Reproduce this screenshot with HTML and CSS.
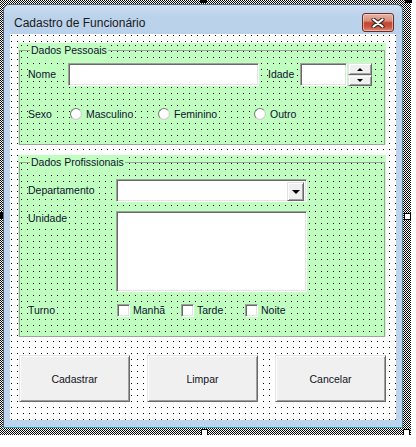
FILE: index.html
```html
<!DOCTYPE html>
<html lang="pt">
<head>
<meta charset="utf-8">
<title>Cadastro de Funcionário</title>
<link rel="stylesheet" href="styles.css">
</head>
<body>
<div class="selection">
  <span class="handle solid h-top"></span>
  <span class="handle solid h-topright"></span>
  <span class="handle solid h-left"></span>
  <span class="handle h-right"></span>
  <span class="handle h-bottom"></span>
  <span class="handle h-bottomright"></span>

  <div class="window">
    <div class="titlebar">
      <span class="title">Cadastro de Funcionário</span>
      <button class="close" type="button" aria-label="Fechar">
        <svg width="14" height="10" viewBox="0 0 14 10">
          <path d="M2.5 1.5 L11.5 8.5 M11.5 1.5 L2.5 8.5" stroke="#3c2a2a" stroke-width="4.2" stroke-linecap="round" fill="none"/>
          <path d="M2.5 1.5 L11.5 8.5 M11.5 1.5 L2.5 8.5" stroke="#ffffff" stroke-width="2.2" stroke-linecap="round" fill="none"/>
        </svg>
      </button>
    </div>

    <div class="client">
      <div class="frame frame-pessoais">
        <fieldset class="group">
          <legend>Dados Pessoais</legend>
          <div class="row row-nome">
            <span class="lbl lbl-nome"><span class="cap">Nome</span></span>
            <span class="textbox tb-nome"></span>
            <span class="lbl lbl-idade"><span class="cap">Idade</span></span>
            <span class="textbox tb-idade"></span>
            <span class="spin">
              <span class="spin-btn"><i class="tri-up"></i></span>
              <span class="spin-btn"><i class="tri-down"></i></span>
            </span>
          </div>
          <div class="row row-sexo">
            <span class="lbl lbl-sexo"><span class="cap">Sexo</span></span>
            <span class="opt opt-m"><span class="opt-body"><span class="radio"></span>Masculino</span></span>
            <span class="opt opt-f"><span class="opt-body"><span class="radio"></span>Feminino</span></span>
            <span class="opt opt-o"><span class="opt-body"><span class="radio"></span>Outro</span></span>
          </div>
        </fieldset>
      </div>

      <div class="frame frame-prof">
        <fieldset class="group">
          <legend>Dados Profissionais</legend>
          <div class="row row-dept">
            <span class="lbl lbl-wide"><span class="cap">Departamento</span></span>
            <span class="textbox combo"><span class="combo-btn"><i class="tri-combo"></i></span></span>
          </div>
          <div class="row row-unid">
            <span class="lbl lbl-wide lbl-top"><span class="cap">Unidade</span></span>
            <span class="textbox tb-unid"></span>
          </div>
          <div class="row row-turno">
            <span class="lbl lbl-wide"><span class="cap">Turno</span></span>
            <span class="chk-opt chk-first"><span class="opt-body"><span class="checkbox"></span>Manhã</span></span>
            <span class="chk-opt"><span class="opt-body"><span class="checkbox"></span>Tarde</span></span>
            <span class="chk-opt"><span class="opt-body"><span class="checkbox"></span>Noite</span></span>
          </div>
        </fieldset>
      </div>

      <div class="buttons">
        <button class="btn" type="button">Cadastrar</button>
        <button class="btn" type="button">Limpar</button>
        <button class="btn" type="button">Cancelar</button>
      </div>
    </div>
  </div>
</div>
</body>
</html>
```

FILE: styles.css
```css
* { box-sizing: border-box; }

html, body {
  margin: 0;
  padding: 0;
  background: #ffffff;
  overflow: hidden;
}

body {
  font-family: "Liberation Sans", Arial, sans-serif;
  font-size: 10.5px;
  color: #101030;
}

/* designer selection hatch */
.selection {
  position: relative;
  width: 416px;
  height: 439px;
  margin: -4px 0 0 -5px;
  padding: 8px 8px 7px 8px;
  background-color: #ffffff;
  background-image: conic-gradient(#000 25%, #fff 0 50%, #000 0 75%, #fff 0);
  background-size: 2px 2px;
}

.handle {
  position: absolute;
  width: 7px;
  height: 7px;
  border: 1px solid #000;
  background: #fff;
}
.handle.solid { background: #000; }
.h-top { left: 205px; top: 0; }
.h-topright { left: 410px; top: 0; }
.h-left { left: 1px; top: 216px; }
.h-right { left: 409px; top: 217px; }
.h-bottom { left: 206px; top: 433px; }
.h-bottomright { left: 408px; top: 433px; }

/* window */
.window {
  width: 400px;
  height: 424px;
  border: 1px solid #56647a;
  border-right-color: #3a8fb0;
  border-bottom-color: #2ea3c8;
  border-radius: 6px 6px 0 0;
  background: linear-gradient(#cadcf0, #bbd2eb 12px, #b9d1ea 29px, #bcd3eb 29px);
  padding: 0 6px 7px 6px;
  display: flex;
  flex-direction: column;
}

.titlebar {
  height: 29px;
  display: flex;
  align-items: flex-start;
}

.title {
  flex: 1;
  padding: 11px 0 0 4px;
  font-family: "Liberation Sans", Arial, sans-serif;
  font-size: 12px;
  line-height: 15px;
  color: #1a1a1a;
}

.close {
  width: 32px;
  height: 19px;
  margin: 8px 2px 0 0;
  padding: 0;
  border: 1px solid #6a2e2a;
  border-radius: 3px;
  background: linear-gradient(#eab3a5, #d88e7c 40%, #c5452f 52%, #c85440 75%, #dc8a70);
  box-shadow: inset 0 0 0 1px rgba(255, 220, 210, 0.55);
  display: flex;
  align-items: center;
  justify-content: center;
}
.close svg { display: block; }

/* client area with designer grid */
.client {
  width: 386px;
  height: 386px;
  background-color: #ffffff;
  background-image: conic-gradient(from 270deg at 1px 1px, #000 25%, transparent 0);
  background-size: 6px 6px;
  background-position: 1px 1px;
  padding: 9px 0 0 8px;
  display: flex;
  flex-direction: column;
}

.frame {
  width: 368px;
  background-color: #c0ffc0;
  background-image: conic-gradient(from 270deg at 1px 1px, #000 25%, transparent 0);
  background-size: 6px 6px;
  background-position: 3px 2px;
  padding: 0 1px 0 1px;
}
.frame-pessoais { height: 102px; }
.frame-prof { height: 182px; margin-top: 10px; }

.group {
  margin: 0;
  height: 100%;
  min-width: 0;
  border: 1px solid #a0a0a0;
  padding: 5px 0 0 8px;
}
.frame-prof .group { padding-top: 9px; }

legend {
  margin-left: 2px;
  padding: 0 1px;
  line-height: 15px;
  font-size: 10.5px;
  background: #c0ffc0;
}

.row {
  display: flex;
  align-items: center;
}

.lbl { line-height: 13px; white-space: nowrap; display: flex; }
.cap { background: #c0ffc0; padding-right: 2px; }
.lbl-nome, .lbl-sexo { width: 40px; flex: none; }
.lbl-idade { width: 32px; margin-left: 9px; flex: none; }
.lbl-wide { width: 88px; flex: none; }
.lbl-top { align-self: flex-start; margin-top: 1px; }

.textbox {
  display: block;
  flex: none;
  height: 23px;
  background: #ffffff;
  border: 1px solid;
  border-color: #a0a0a0 #ffffff #ffffff #a0a0a0;
  box-shadow: inset 1px 1px 0 #696969, inset -1px -1px 0 #e3e3e3;
}
.tb-nome { width: 191px; }
.tb-idade { width: 47px; }
.tb-unid { width: 191px; height: 81px; }

.spin {
  display: flex;
  flex-direction: column;
  width: 24px;
  height: 23px;
  margin-left: 1px;
}
.spin-btn, .combo-btn {
  display: flex;
  align-items: center;
  justify-content: center;
  background: #f0f0f0;
  border: 1px solid;
  border-color: #e3e3e3 #696969 #696969 #e3e3e3;
  box-shadow: inset 1px 1px 0 #ffffff, inset -1px -1px 0 #a0a0a0;
}
.spin-btn { height: 12px; }
.spin-btn + .spin-btn { height: 11px; }

.tri-up, .tri-down, .tri-combo {
  display: block;
  width: 0;
  height: 0;
  border-left: 3px solid transparent;
  border-right: 3px solid transparent;
}
.tri-up { border-bottom: 3px solid #000; }
.tri-down { border-top: 3px solid #000; }
.tri-combo {
  border-left-width: 4px;
  border-right-width: 4px;
  border-top: 4px solid #000;
}

.combo {
  width: 191px;
  display: flex;
  justify-content: flex-end;
  padding: 2px;
}
.combo-btn { width: 17px; height: 19px; }

.row-sexo { margin-top: 20px; height: 16px; }

.opt, .chk-opt {
  display: flex;
  align-items: center;
  flex: none;
  line-height: 13px;
}
.opt-body {
  display: flex;
  align-items: center;
  background: #c0ffc0;
  padding: 1px 2px 1px 0;
}
.opt-m { width: 88px; margin-left: 2px; }
.opt-f { width: 96px; }

.radio {
  width: 12px;
  height: 12px;
  margin-right: 4px;
  border-radius: 50%;
  border: 1px solid;
  border-color: #7c7c7c #d0d0d0 #d0d0d0 #7c7c7c;
  background: radial-gradient(circle at 45% 45%, #ffffff 45%, #e6e6e6 100%);
  flex: none;
}

.row-dept { height: 23px; }
.row-unid { margin-top: 9px; align-items: flex-start; }
.row-turno { margin-top: 12px; height: 13px; }

.chk-opt { width: 64px; }
.chk-first { margin-left: 1px; }

.checkbox {
  width: 13px;
  height: 13px;
  margin-right: 3px;
  background: #ffffff;
  border: 1px solid;
  border-color: #a0a0a0 #ffffff #ffffff #a0a0a0;
  box-shadow: inset 1px 1px 0 #696969, inset -1px -1px 0 #e3e3e3;
  flex: none;
}

.buttons {
  display: flex;
  gap: 17px;
  margin: 18px 0 0 1px;
}
.btn {
  width: 111px;
  height: 47px;
  padding: 0;
  background: #f0f0f0;
  border: 1px solid;
  border-color: #e3e3e3 #696969 #696969 #e3e3e3;
  box-shadow: inset 1px 1px 0 #ffffff, inset -1px -1px 0 #a0a0a0;
  font-family: "Liberation Sans", Arial, sans-serif;
  font-size: 10.5px;
  color: #101020;
}
```
